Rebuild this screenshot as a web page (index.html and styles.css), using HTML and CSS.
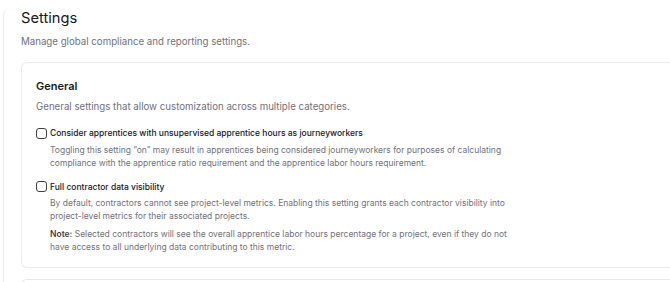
FILE: index.html
```html
<!DOCTYPE html>
<html lang="en">
<head>
    <meta charset="UTF-8">
    <meta name="viewport" content="width=device-width, initial-scale=1.0">
    <title>Settings</title>
    <link rel="stylesheet" href="styles.css">
</head>
<body>
    <div class="panel">
        <h1>Settings</h1>
        <p class="subtitle">Manage global compliance and reporting settings.</p>

        <section class="card">
            <h2>General</h2>
            <p class="card-desc">General settings that allow customization across multiple categories.</p>

            <div class="option">
                <label class="option-label">
                    <input type="checkbox">
                    <span>Consider apprentices with unsupervised apprentice hours as journeyworkers</span>
                </label>
                <p class="option-text">Toggling this setting &ldquo;on&rdquo; may result in apprentices being considered journeyworkers for purposes of calculating compliance with the apprentice ratio requirement and the apprentice labor hours requirement.</p>
            </div>

            <div class="option">
                <label class="option-label">
                    <input type="checkbox">
                    <span>Full contractor data visibility</span>
                </label>
                <p class="option-text">By default, contractors cannot see project-level metrics. Enabling this setting grants each contractor visibility into project-level metrics for their associated projects.</p>
                <p class="option-text note"><strong>Note:</strong> Selected contractors will see the overall apprentice labor hours percentage for a project, even if they do not have access to all underlying data contributing to this metric.</p>
            </div>
        </section>

        <section class="card card-next"></section>
    </div>
</body>
</html>
```

FILE: styles.css
```css
body {
    margin: 0;
    font-family: Inter, "Noto Sans", sans-serif;
    color: #18181b;
    background: #fff;
    overflow: hidden;
}
.panel {
    margin: 8px 0 0 3px;
    padding: 1px 0 0 17px;
    border-left: 1px solid #e9eaec;
    border-top-left-radius: 8px;
    height: 300px;
}
h1 {
    margin: 0;
    font-size: 14.7px;
    font-weight: 400;
    line-height: 18px;
}
.subtitle {
    margin: 8px 0 0;
    font-size: 9.7px;
    line-height: 14px;
    color: #71717a;
}
.card {
    margin-top: 13px;
    padding: 15px 14px 13px;
    border: 1px solid #e9eaec;
    border-right: 0;
    border-radius: 6px 0 0 6px;
}
.card-next {
    margin-top: 11px;
    height: 20px;
}
h2 {
    margin: 0;
    font-size: 11px;
    font-weight: 600;
    line-height: 16px;
}
.card-desc {
    margin: 6px 0 12px;
    font-size: 9.7px;
    line-height: 14px;
    color: #71717a;
}
.option {
    margin-top: 10px;
}
.option-label {
    display: flex;
    align-items: center;
    gap: 3px;
    font-size: 8.5px;
    font-weight: 500;
    line-height: 14px;
}
.option-label input {
    appearance: none;
    margin: 0;
    width: 11px;
    height: 11px;
    border: 1.3px solid #3f3f46;
    border-radius: 3px;
    background: #fff;
}
.option-text {
    margin: 3.5px 0 0 14px;
    max-width: 462px;
    font-size: 8.5px;
    line-height: 13px;
    color: #71717a;
}
.option-text.note {
    margin-top: 5px;
}
.option-text strong {
    color: #3f3f46;
    font-weight: 600;
}
```
